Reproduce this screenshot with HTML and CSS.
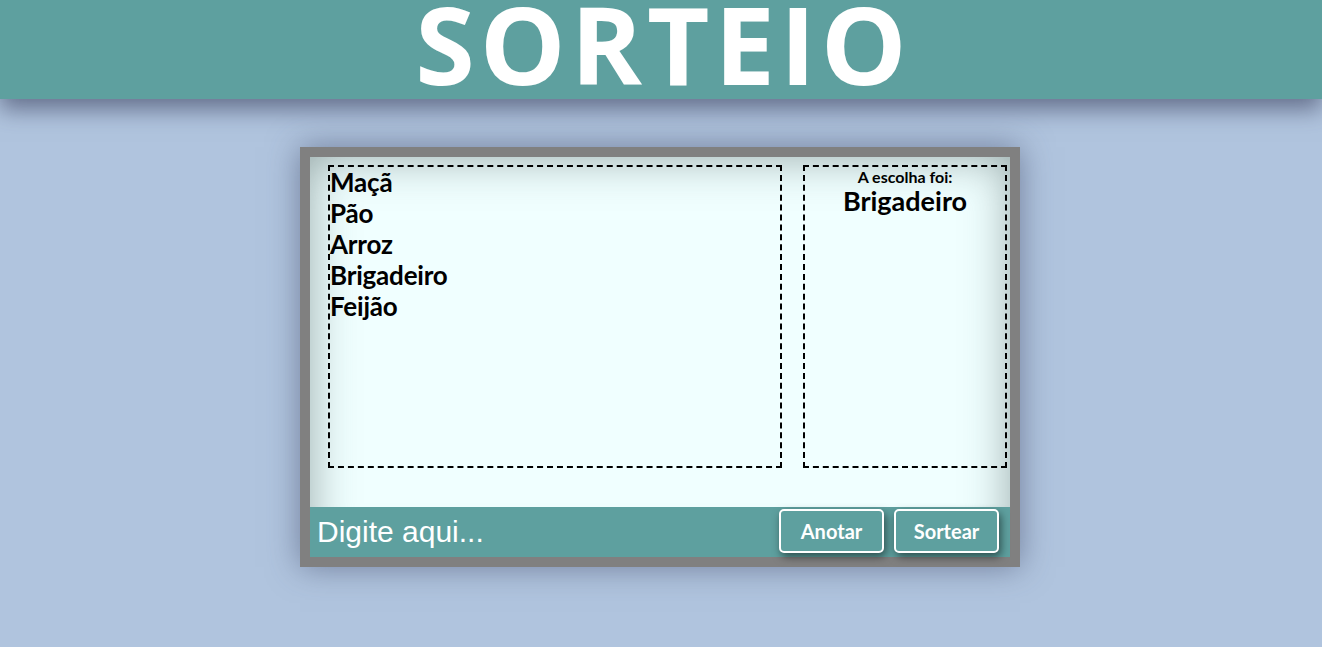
FILE: index.html
```html
<!DOCTYPE html>
<html lang="pt">
<head>
<meta charset="utf-8">
<title>Sorteio</title>
<link rel="stylesheet" href="styles.css">
</head>
<body>
<header class="topo">
  <h1 class="titulo">SORTEIO</h1>
</header>
<main class="area">
  <section class="caixa">
    <div class="conteudo">
      <ul class="lista">
        <li>Maçã</li>
        <li>Pão</li>
        <li>Arroz</li>
        <li>Brigadeiro</li>
        <li>Feijão</li>
      </ul>
      <div class="resultado">
        <p class="rotulo">A escolha foi:</p>
        <p class="escolha">Brigadeiro</p>
      </div>
    </div>
    <div class="barra">
      <input class="entrada" type="text" placeholder="Digite aqui...">
      <button class="botao">Anotar</button>
      <button class="botao">Sortear</button>
    </div>
  </section>
</main>
</body>
</html>
```

FILE: styles.css
```css
* { box-sizing: border-box; }
html, body { margin: 0; padding: 0; }
body {
  background: #b0c4de;
  font-family: "Lato", "Open Sans", sans-serif;
  height: 647px;
  overflow: hidden;
}
.topo {
  background: #5ea09f;
  height: 99px;
  display: flex;
  justify-content: center;
  align-items: flex-start;
  box-shadow: 0 10px 22px rgba(50, 55, 85, 0.6);
  position: relative;
}
.titulo {
  margin: -6px 0 0;
  color: #fff;
  font-family: "Open Sans", sans-serif;
  font-weight: 700;
  font-size: 108px;
  letter-spacing: 5px;
  line-height: 99px;
  padding-left: 5px;
}
.area {
  display: flex;
  justify-content: center;
  padding-top: 48px;
  padding-right: 2px;
}
.caixa {
  width: 720px;
  height: 420px;
  border: 10px solid #808080;
  background: #f0ffff;
  box-shadow: 0 0 30px rgba(60, 70, 100, 0.55), inset 0 0 45px rgba(60, 80, 80, 0.5);
  display: flex;
  flex-direction: column;
}
.conteudo {
  flex: 1;
  display: flex;
  gap: 21px;
  padding: 8px 3px 0 18px;
}
.lista {
  list-style: none;
  margin: 0;
  padding: 0;
  width: 454px;
  height: 303px;
  border: 2px dashed #000;
  font-weight: 700;
  font-size: 26px;
  line-height: 31px;
  letter-spacing: -0.2px;
  color: #000;
}
.resultado {
  width: 204px;
  height: 303px;
  border: 2px dashed #000;
  text-align: center;
}
.rotulo {
  margin: 1px 0 0;
  font-size: 16px;
  font-weight: 700;
  letter-spacing: 0;
  line-height: 18px;
}
.escolha {
  margin: 0;
  font-size: 27px;
  font-weight: 700;
  line-height: 30px;
}
.barra {
  height: 50px;
  background: #5ea09f;
  display: flex;
  align-items: center;
  gap: 10px;
  padding: 0 11px 0 0;
}
.entrada {
  flex: 1;
  height: 46px;
  border: none;
  background: transparent;
  font-family: "Liberation Sans", Arial, sans-serif;
  font-size: 30px;
  color: #fff;
  padding: 0 7px;
  outline: none;
}
.entrada::placeholder { color: #fff; opacity: 1; }
.botao {
  width: 105px;
  height: 44px;
  border: 2px solid #fff;
  border-radius: 5px;
  background: #5ea09f;
  color: #fff;
  font-family: "Lato", "Open Sans", sans-serif;
  font-weight: 700;
  font-size: 20px;
  box-shadow: 2px 4px 8px rgba(0, 0, 0, 0.5);
  margin-top: -2px;
}
```
